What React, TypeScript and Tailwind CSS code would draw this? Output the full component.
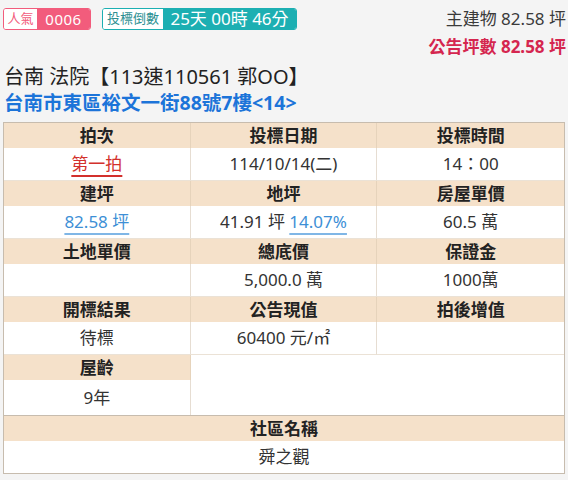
import React from "react"

const font = { fontFamily: '"Noto Sans", "Noto Sans CJK TC", sans-serif' }

function Head({ children, last }: { children: React.ReactNode; last?: boolean }) {
  return (
    <div
      className={`h-[25px] flex items-center justify-center bg-[#f5e1ca] font-bold text-[17px] text-[#222] ${
        last ? "" : "border-r border-[#e6d3bb]"
      }`}
    >
      {children}
    </div>
  )
}

function Val({ children, last }: { children?: React.ReactNode; last?: boolean }) {
  return (
    <div
      className={`h-[33px] flex items-center justify-center bg-white text-[17px] text-[#333] border-b border-[#ebe2d6] ${
        last ? "" : "border-r border-r-[#e6ddd2]"
      }`}
    >
      {children}
    </div>
  )
}

const rows: { heads: string[]; vals: React.ReactNode[] }[] = [
  {
    heads: ["拍次", "投標日期", "投標時間"],
    vals: [
      <span className="text-[#d3302c] underline decoration-[#d3302c] decoration-[1.5px] underline-offset-[5px]">第一拍</span>,
      "114/10/14(二)",
      "14：00",
    ],
  },
  {
    heads: ["建坪", "地坪", "房屋單價"],
    vals: [
      <span className="text-[#3d8fd6] underline decoration-[#7fb6e6] decoration-2 underline-offset-[5px]">82.58 坪</span>,
      <span>
        41.91 坪{" "}
        <span className="text-[#3d8fd6] underline decoration-[#7fb6e6] decoration-2 underline-offset-[5px]">14.07%</span>
      </span>,
      "60.5 萬",
    ],
  },
  {
    heads: ["土地單價", "總底價", "保證金"],
    vals: ["", "5,000.0 萬", "1000萬"],
  },
  {
    heads: ["開標結果", "公告現值", "拍後增值"],
    vals: ["待標", "60400 元/㎡", ""],
  },
]

export default function App() {
  return (
    <div className="w-[568px] h-[480px] bg-[#f4f4f4] overflow-hidden" style={font}>
      {/* top bar */}
      <div className="h-[64px] flex justify-between items-start pt-[8px] pl-[3px] pr-[2px]">
        <div className="flex items-center gap-[11px]">
          <div className="flex h-[22px] rounded-[3px] border border-[#f25c7c] overflow-hidden">
            <span className="w-[33px] flex items-center justify-center bg-white text-[#f25c7c] text-[13px]">人氣</span>
            <span className="w-[53px] flex items-center justify-center bg-[#f25c7c] text-white text-[15px] tracking-[0.5px]">0006</span>
          </div>
          <div className="flex h-[22px] rounded-[3px] border border-[#1cafb2] overflow-hidden">
            <span className="w-[60px] flex items-center justify-center bg-white text-[#2c8f92] text-[13px]">投標倒數</span>
            <span className="w-[133px] flex items-center justify-center bg-[#1cafb2] text-white text-[17px]">25天 00時 46分</span>
          </div>
        </div>
        <div className="flex flex-col items-end">
          <div className="text-[17px] leading-[22px] text-[#3a3a3a]">主建物 82.58 坪</div>
          <div className="mt-[6px] text-[17px] leading-[22px] font-bold text-[#d5264f]">公告坪數 82.58 坪</div>
        </div>
      </div>

      {/* title */}
      <div className="px-[4px]">
        <div className="text-[20px] leading-[26px] text-[#222]">台南 法院【113速110561 郭OO】</div>
        <div className="text-[19.5px] leading-[26px] font-bold text-[#1c74d9]">台南市東區裕文一街88號7樓&lt;14&gt;</div>
      </div>

      {/* table */}
      <div className="mx-[3px] mt-[6px] border border-[#c7bcae] bg-white">
        <div className="grid grid-cols-3">
          {rows.map((r, i) => (
            <React.Fragment key={i}>
              {r.heads.map((h, j) => (
                <Head key={"h" + j} last={j === 2}>
                  {h}
                </Head>
              ))}
              {r.vals.map((v, j) => (
                <Val key={"v" + j} last={j === 2}>
                  {v}
                </Val>
              ))}
            </React.Fragment>
          ))}
          <Head>屋齡</Head>
          <div className="col-span-2 row-span-2 bg-white" />
          <div className="h-[35px] flex items-center justify-center bg-white text-[17px] text-[#333] border-r border-[#e6ddd2]">
            9年
          </div>
        </div>
        <div className="border-t border-[#c7bcae]">
          <div className="h-[25px] flex items-center justify-center bg-[#f5e1ca] font-bold text-[17px] text-[#222]">社區名稱</div>
          <div className="h-[32px] flex items-center justify-center bg-white text-[17px] text-[#333]">舜之觀</div>
        </div>
      </div>
    </div>
  )
}
